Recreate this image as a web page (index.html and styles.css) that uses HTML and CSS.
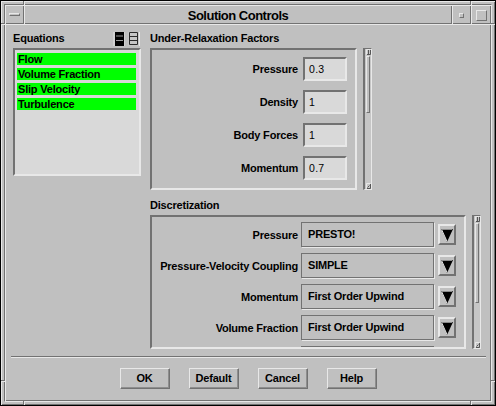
FILE: index.html
```html
<!DOCTYPE html>
<html>
<head>
<meta charset="utf-8">
<title>Solution Controls</title>
<link rel="stylesheet" href="styles.css">
</head>
<body>
<div class="window">
  <span class="notch nv n-tl"></span>
  <span class="notch nv n-tr"></span>
  <span class="notch nv n-bl"></span>
  <span class="notch nv n-br"></span>
  <span class="notch nh n-lt"></span>
  <span class="notch nh n-lb"></span>
  <span class="notch nh n-rt"></span>
  <span class="notch nh n-rb"></span>
  <div class="ring">
    <div class="client">
      <div class="titlebar">
        <div class="tb-btn tb-menu"><span class="menu-bar"></span></div>
        <div class="tb-title">Solution Controls</div>
        <div class="tb-btn tb-min"><span class="min-sq"></span></div>
        <div class="tb-btn tb-max"><span class="max-sq"></span></div>
      </div>
      <div class="content">
        <div class="panels">
          <div class="col-left">
            <div class="head">
              <span class="head-label">Equations</span>
              <span class="head-icons">
                <svg class="icon" width="12" height="14" viewBox="0 0 12 14">
                  <rect x="0" y="0" width="12" height="14" fill="#d2d2d2"/>
                  <rect x="2" y="0" width="9" height="14" fill="#000"/>
                  <rect x="3" y="3.5" width="7" height="1" fill="#9a9a9a"/>
                  <rect x="3" y="8" width="7" height="1" fill="#9a9a9a"/>
                </svg>
                <svg class="icon" width="12" height="14" viewBox="0 0 12 14">
                  <rect x="0" y="0" width="12" height="14" fill="#c6c6c6"/>
                  <rect x="11" y="0" width="1" height="14" fill="#e6e6e6"/>
                  <path d="M1.5 0.5V12.5M9.5 0.5V12.5M1.5 0.5H9.5M1.5 4.5H9.5M1.5 8.5H9.5M1.5 12.5H9.5" stroke="#2a2a2a" stroke-width="1" fill="none"/>
                </svg>
              </span>
            </div>
            <div class="listbox">
              <div class="item">Flow</div>
              <div class="item">Volume Fraction</div>
              <div class="item">Slip Velocity</div>
              <div class="item">Turbulence</div>
            </div>
          </div>
          <div class="col-right">
            <div class="head"><span class="head-label">Under-Relaxation Factors</span></div>
            <div class="scrollgroup">
              <div class="frame relax-frame">
                <div class="relax-row"><span class="label">Pressure</span><span class="field">0.3</span></div>
                <div class="relax-row"><span class="label">Density</span><span class="field">1</span></div>
                <div class="relax-row"><span class="label">Body Forces</span><span class="field">1</span></div>
                <div class="relax-row"><span class="label">Momentum</span><span class="field">0.7</span></div>
              </div>
              <div class="vscroll">
                <span class="sb-arrow">
                  <svg width="5" height="6" viewBox="0 0 5 6"><path d="M0.5 5.5V0.5H4.5" stroke="#e8e8e8" fill="none"/><path d="M2.5 1V5M1 5.5H4.5V1" stroke="#555" fill="none"/></svg>
                </span>
                <span class="sb-thumb relax-thumb"></span>
                <span class="sb-rest"></span>
                <span class="sb-arrow">
                  <svg width="5" height="6" viewBox="0 0 5 6"><path d="M0.5 5.5V0.5H4.5" stroke="#e8e8e8" fill="none"/><path d="M1.5 4.5L3.5 2.5M1 5.5H4.5V1" stroke="#555" fill="none"/></svg>
                </span>
              </div>
            </div>
            <div class="head disc-head"><span class="head-label">Discretization</span></div>
            <div class="scrollgroup">
              <div class="frame disc-frame">
                <div class="disc-row"><span class="label">Pressure</span><span class="combo">PRESTO!</span><span class="arrow-btn"><svg width="12" height="13" viewBox="0 0 12 13"><polygon points="0,0 12,0 6,13" fill="#000"/><path d="M0.8 0.5H11.2" stroke="#8a8a8a"/><path d="M0.6 0.6L6 12.4" stroke="#e8e8e8"/></svg></span></div>
                <div class="disc-row"><span class="label">Pressure-Velocity Coupling</span><span class="combo">SIMPLE</span><span class="arrow-btn"><svg width="12" height="13" viewBox="0 0 12 13"><polygon points="0,0 12,0 6,13" fill="#000"/><path d="M0.8 0.5H11.2" stroke="#8a8a8a"/><path d="M0.6 0.6L6 12.4" stroke="#e8e8e8"/></svg></span></div>
                <div class="disc-row"><span class="label">Momentum</span><span class="combo">First Order Upwind</span><span class="arrow-btn"><svg width="12" height="13" viewBox="0 0 12 13"><polygon points="0,0 12,0 6,13" fill="#000"/><path d="M0.8 0.5H11.2" stroke="#8a8a8a"/><path d="M0.6 0.6L6 12.4" stroke="#e8e8e8"/></svg></span></div>
                <div class="disc-row"><span class="label">Volume Fraction</span><span class="combo">First Order Upwind</span><span class="arrow-btn"><svg width="12" height="13" viewBox="0 0 12 13"><polygon points="0,0 12,0 6,13" fill="#000"/><path d="M0.8 0.5H11.2" stroke="#8a8a8a"/><path d="M0.6 0.6L6 12.4" stroke="#e8e8e8"/></svg></span></div>
                <div class="disc-row"><span class="label"></span><span class="combo"></span><span class="arrow-btn"></span></div>
              </div>
              <div class="vscroll">
                <span class="sb-arrow">
                  <svg width="5" height="6" viewBox="0 0 5 6"><path d="M0.5 5.5V0.5H4.5" stroke="#e8e8e8" fill="none"/><path d="M2.5 1V5M1 5.5H4.5V1" stroke="#555" fill="none"/></svg>
                </span>
                <span class="sb-thumb disc-thumb"></span>
                <span class="sb-rest"></span>
                <span class="sb-arrow">
                  <svg width="5" height="6" viewBox="0 0 5 6"><path d="M0.5 5.5V0.5H4.5" stroke="#e8e8e8" fill="none"/><path d="M1.5 4.5L3.5 2.5M1 5.5H4.5V1" stroke="#555" fill="none"/></svg>
                </span>
              </div>
            </div>
          </div>
        </div>
        <div class="separator"></div>
        <div class="buttons">
          <span class="btn">OK</span>
          <span class="btn">Default</span>
          <span class="btn">Cancel</span>
          <span class="btn">Help</span>
        </div>
      </div>
    </div>
  </div>
</div>
</body>
</html>
```

FILE: styles.css
```css
:root {
  --bg: #c0c0c0;
  --light: #e8e8e8;
  --dark: #727272;
  --field: #d9d9d9;
}

html, body {
  margin: 0;
  padding: 0;
}

body {
  width: 496px;
  height: 406px;
  overflow: hidden;
  background: var(--bg);
  color: #000;
  font-family: "Liberation Sans", Arial, sans-serif;
  font-size: 11px;
  font-weight: bold;
  letter-spacing: -0.2px;
}

.window {
  position: relative;
  width: 496px;
  height: 406px;
  box-sizing: border-box;
  border: 1px solid #000;
  padding: 3px;
  background: var(--bg);
  box-shadow: inset 1px 1px 0 var(--light), inset -1px -1px 0 var(--dark);
}

/* corner splits of the resize frame */
.notch {
  position: absolute;
  background: var(--dark);
}
.nv { width: 1px; height: 4px; box-shadow: 1px 0 0 var(--light); }
.nh { width: 4px; height: 1px; box-shadow: 0 1px 0 var(--light); }
.n-tl { left: 22px; top: 0; }
.n-tr { left: 469px; top: 0; }
.n-bl { left: 22px; top: 400px; }
.n-br { left: 469px; top: 400px; }
.n-lt { left: 0; top: 22px; }
.n-lb { left: 0; top: 379px; }
.n-rt { left: 490px; top: 22px; }
.n-rb { left: 490px; top: 379px; }

.ring {
  height: 100%;
  box-sizing: border-box;
  border: 1px solid;
  border-color: var(--dark) var(--light) var(--light) var(--dark);
}

.client {
  height: 100%;
  display: flex;
  flex-direction: column;
}

.titlebar {
  display: flex;
  height: 19px;
  flex: none;
}

.tb-btn,
.tb-title {
  box-shadow: inset 1px 1px 0 var(--light), inset -1px -1px 0 var(--dark);
}

.tb-btn {
  display: flex;
  align-items: center;
  justify-content: center;
  flex: none;
}

.tb-menu { width: 19px; }
.tb-min { width: 19px; }
.tb-max { width: 20px; }

.tb-title {
  flex: 1;
  text-align: center;
  font-size: 13px;
  letter-spacing: -0.5px;
  line-height: 19px;
  padding-top: 1px;
  box-sizing: border-box;
}

.menu-bar {
  width: 11px;
  height: 3px;
  box-sizing: border-box;
  border: 1px solid;
  border-color: var(--light) var(--dark) var(--dark) var(--light);
}

.min-sq {
  width: 5px;
  height: 5px;
  box-sizing: border-box;
  border: 1px solid;
  border-color: var(--light) var(--dark) var(--dark) var(--light);
  margin-top: 1px;
}

.max-sq {
  width: 11px;
  height: 11px;
  box-sizing: border-box;
  border: 1px solid;
  border-color: var(--light) var(--dark) var(--dark) var(--light);
  margin-top: 2px;
  margin-left: 1px;
}

.content {
  flex: 1;
  box-shadow: inset 1px 1px 0 var(--light), inset -1px -1px 0 var(--dark);
  padding-top: 7px;
  box-sizing: border-box;
}

.panels {
  display: flex;
  gap: 9px;
  margin: 0 8px;
}

.col-left {
  width: 128px;
  flex: none;
}

.col-right {
  width: 331px;
  flex: none;
}

.head {
  height: 17px;
  line-height: 14px;
  display: flex;
  justify-content: space-between;
  align-items: flex-start;
}

.head-icons {
  display: flex;
  gap: 3px;
  margin-top: 1px;
  margin-right: 1px;
}

.icon {
  display: block;
}

.listbox {
  height: 128px;
  box-sizing: border-box;
  border: 2px solid;
  border-color: var(--dark) var(--light) var(--light) var(--dark);
  background: var(--field);
  padding: 3px 3px 0 2px;
}

.item {
  height: 12px;
  line-height: 12px;
  background: #00ff00;
  margin-bottom: 3px;
  padding-left: 1px;
  white-space: nowrap;
}

.scrollgroup {
  display: flex;
  gap: 6px;
}

.frame {
  box-sizing: border-box;
  border: 2px solid;
  border-color: var(--dark) var(--light) var(--light) var(--dark);
  overflow: hidden;
  display: flex;
  flex-direction: column;
}

.relax-frame {
  width: 207px;
  height: 142px;
  padding: 7px 8px 0 0;
  gap: 9px;
}

.disc-head {
  margin-top: 8px;
}

.disc-frame {
  width: 316px;
  height: 134px;
  padding: 5px 8px 0 0;
  gap: 6px;
}

.relax-row {
  display: flex;
  justify-content: flex-end;
  align-items: center;
  gap: 5px;
  height: 24px;
  flex: none;
}

.label {
  white-space: nowrap;
}

.field {
  width: 44px;
  height: 24px;
  box-sizing: border-box;
  border: 2px solid;
  border-color: var(--dark) var(--light) var(--light) var(--dark);
  background: var(--field);
  padding-left: 4px;
  font-weight: normal;
  font-size: 10.5px;
  letter-spacing: 0.3px;
  line-height: 20px;
}

.disc-row {
  display: flex;
  justify-content: flex-end;
  align-items: center;
  height: 25px;
  flex: none;
}

.disc-row .label {
  margin-right: 3px;
}

.combo {
  width: 133px;
  height: 25px;
  box-sizing: border-box;
  border: 1px solid var(--dark);
  box-shadow: 1px 1px 0 var(--light);
  padding-left: 6px;
  line-height: 23px;
  white-space: nowrap;
}

.arrow-btn {
  width: 18px;
  height: 21px;
  margin-left: 4px;
  box-sizing: border-box;
  border: 2px solid;
  border-color: var(--light) var(--dark) var(--dark) var(--light);
  display: flex;
  align-items: center;
  justify-content: center;
}

.arrow-btn svg {
  display: block;
  margin-top: 1px;
}

.vscroll {
  width: 9px;
  flex: none;
  box-sizing: border-box;
  border-style: solid;
  border-width: 1px 1px 1px 2px;
  border-color: var(--dark) var(--light) var(--light) var(--dark);
  background: #c6c6c6;
  display: flex;
  flex-direction: column;
  align-items: center;
}

.sb-arrow {
  height: 6px;
  flex: none;
  display: block;
}

.sb-arrow svg {
  display: block;
}

.sb-thumb {
  width: 4px;
  flex: none;
  box-sizing: border-box;
  border: 1px solid;
  border-color: var(--light) var(--dark) var(--dark) var(--light);
  background: var(--bg);
  margin-top: 1px;
}

.relax-thumb { height: 57px; }
.disc-thumb { height: 80px; }

.sb-rest { flex: 1; }

.separator {
  height: 1px;
  border-top: 1px solid var(--dark);
  border-bottom: 1px solid var(--light);
  height: 0;
  margin: 7px 5px 0 6px;
}

.buttons {
  display: flex;
  justify-content: center;
  gap: 19px;
  margin-top: 10px;
}

.btn {
  width: 50px;
  height: 21px;
  box-sizing: border-box;
  border: 1px solid;
  border-color: var(--light) var(--dark) var(--dark) var(--light);
  box-shadow: inset -1px -1px 0 #8e8e8e;
  text-align: center;
  line-height: 19px;
}
```
